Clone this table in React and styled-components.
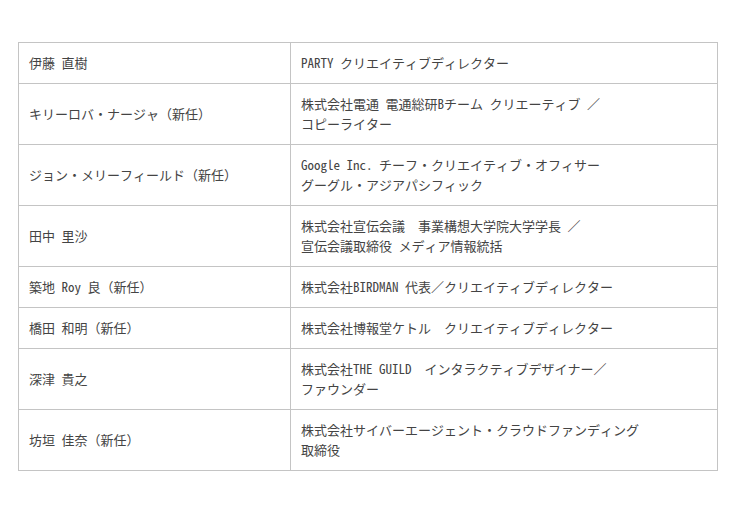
import React from 'react';
import styled, { createGlobalStyle } from 'styled-components';

const GlobalStyle = createGlobalStyle`
  body {
    margin: 0;
    background: #fff;
  }
`;

const Page = styled.div`
  padding: 42px 0 0 18px;
`;

const Table = styled.table`
  width: 700px;
  border-collapse: collapse;
  font-family: "Noto Sans Mono CJK JP", "Noto Sans CJK JP", monospace;
  font-size: 13px;
  line-height: 20px;
  color: #444;
`;

const Cell = styled.td`
  border: 1px solid #c4c4c4;
  padding: 10px;
  vertical-align: middle;
  width: ${props => props.name ? '251px' : 'auto'};
`;

const members = [
  { name: '伊藤 直樹', role: ['PARTY クリエイティブディレクター'] },
  { name: 'キリーロバ・ナージャ（新任）', role: ['株式会社電通 電通総研Bチーム クリエーティブ ／', 'コピーライター'] },
  { name: 'ジョン・メリーフィールド（新任）', role: ['Google Inc. チーフ・クリエイティブ・オフィサー', 'グーグル・アジアパシフィック'] },
  { name: '田中 里沙', role: ['株式会社宣伝会議　事業構想大学院大学学長 ／', '宣伝会議取締役 メディア情報統括'] },
  { name: '築地 Roy 良（新任）', role: ['株式会社BIRDMAN 代表／クリエイティブディレクター'] },
  { name: '橋田 和明（新任）', role: ['株式会社博報堂ケトル　クリエイティブディレクター'] },
  { name: '深津 貴之', role: ['株式会社THE GUILD　インタラクティブデザイナー／', 'ファウンダー'] },
  { name: '坊垣 佳奈（新任）', role: ['株式会社サイバーエージェント・クラウドファンディング', '取締役'] },
];

const App = () => (
  <Page>
    <GlobalStyle />
    <Table>
      <tbody>
        {members.map(m => (
          <tr key={m.name}>
            <Cell name>{m.name}</Cell>
            <Cell>
              {m.role.map((line, i) => (
                <React.Fragment key={line}>
                  {i > 0 && <br />}
                  {line}
                </React.Fragment>
              ))}
            </Cell>
          </tr>
        ))}
      </tbody>
    </Table>
  </Page>
);

export default App;
